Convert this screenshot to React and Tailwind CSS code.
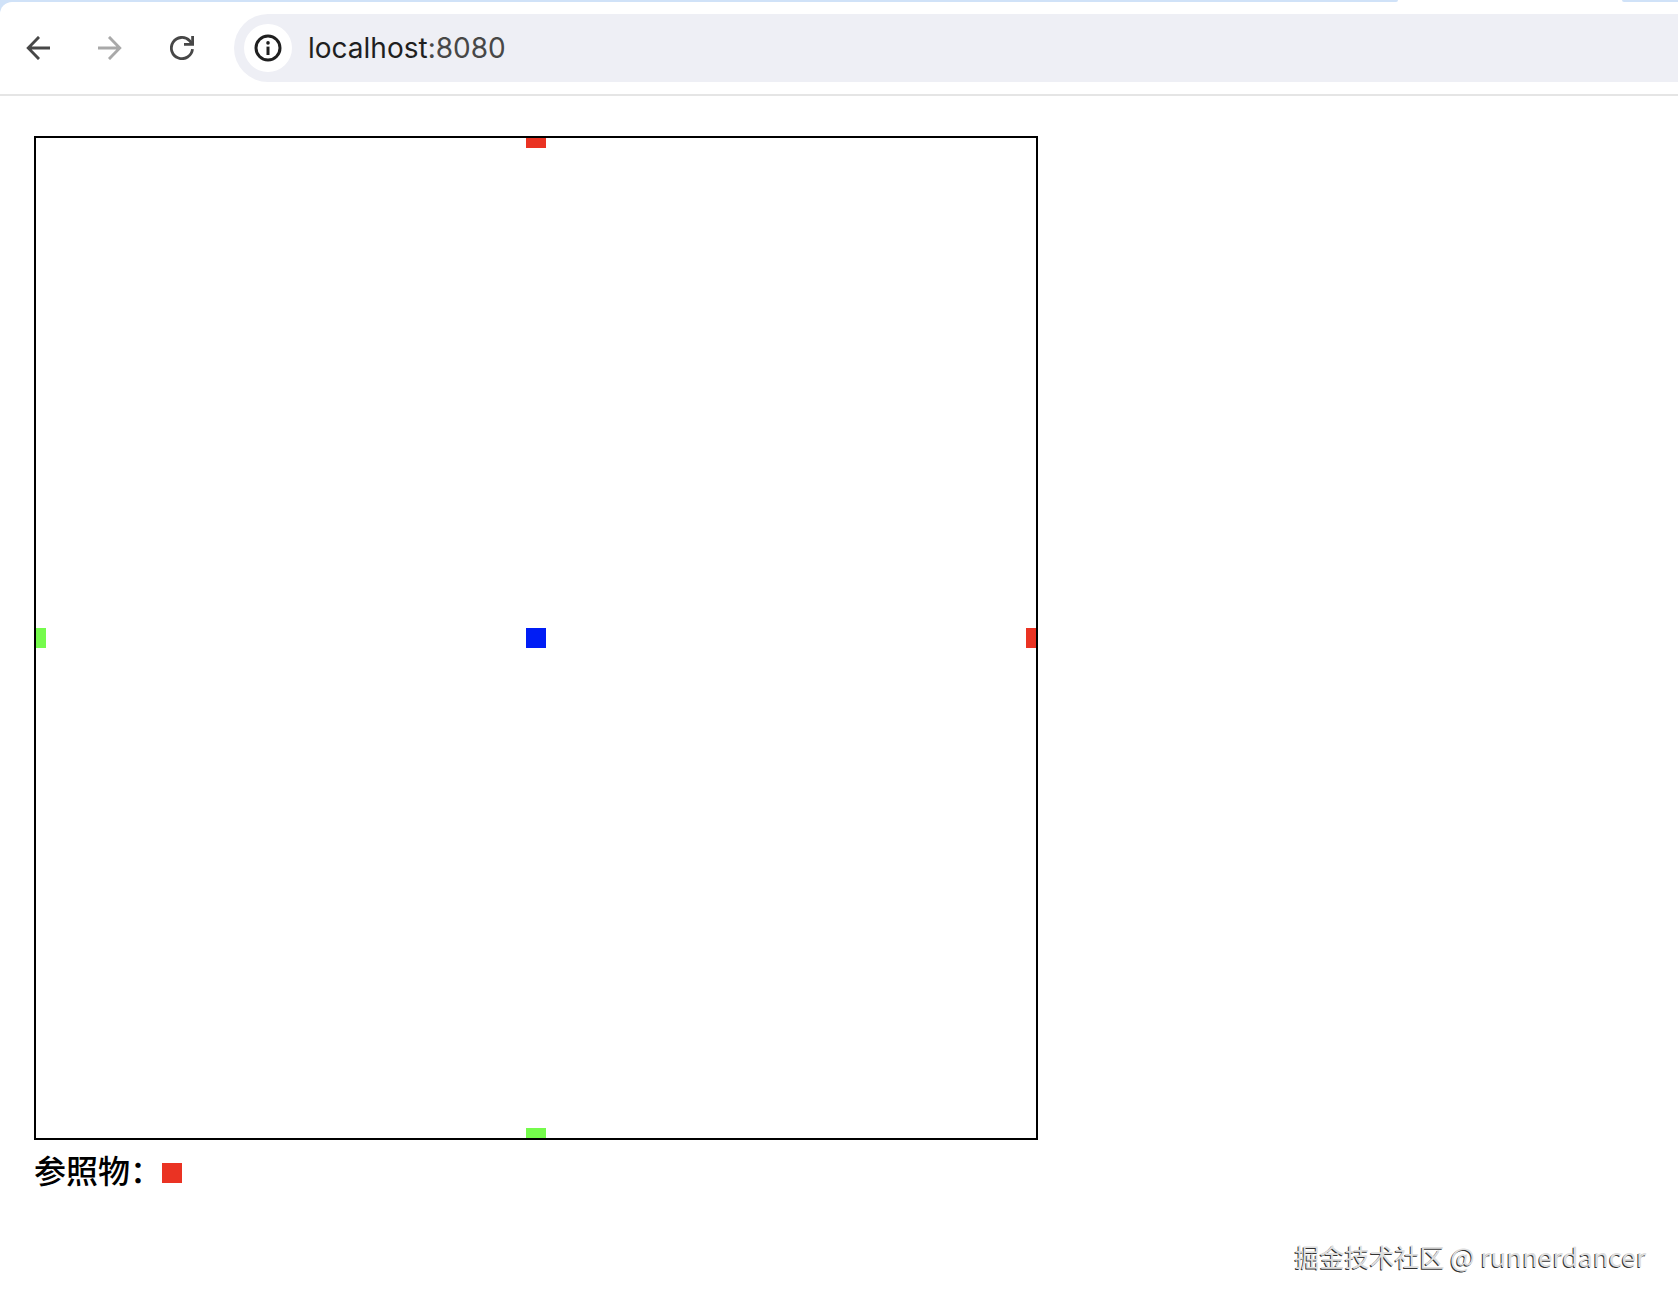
function Icon({ children, className }) {
  return (
    <svg viewBox="0 0 24 24" aria-hidden="true" className={className} fill="none" stroke="currentColor">
      {children}
    </svg>
  );
}

function TabStrip() {
  return (
    <div className="flex h-[2px] w-full bg-white">
      <div className="h-full flex-1 rounded-br-full bg-[#d0e2f8]" />
      <div className="h-full w-[224px]" />
      <div className="h-full w-[56px] rounded-bl-full bg-[#d0e2f8]" />
    </div>
  );
}

function Toolbar() {
  return (
    <header className="bg-[#d0e2f8]">
      <TabStrip />
      <div className="flex h-[94px] items-center rounded-tl-xl border-b-2 border-[#e5e5e5] bg-white">
        <nav className="flex shrink-0 items-center gap-12 pl-[26px]">
          <button type="button" aria-label="Back" className="size-6 text-[#474747]">
            <Icon className="size-6">
              <path d="M24 12H2.2M13 .9 2.2 12l10.8 11.1" strokeWidth="2.8" />
            </Icon>
          </button>
          <button type="button" aria-label="Forward" className="size-6 text-[#a9a9a9]">
            <Icon className="size-6">
              <path d="M0 12h21.8M11 .9 21.8 12 11 23.1" strokeWidth="2.8" />
            </Icon>
          </button>
          <button type="button" aria-label="Reload" className="size-6 text-[#474747]">
            <Icon className="size-6">
              <path d="M22.5 13.2A10.6 10.6 0 1 1 19.6 4.7l2.6 3.4" strokeWidth="2.8" />
              <path d="M22.6 0v8.4H14" strokeWidth="2.8" />
            </Icon>
          </button>
        </nav>
        <div className="ml-10 flex h-[68px] min-w-0 flex-1 items-center gap-4 rounded-l-full bg-[#eeeff5] pl-[10px]">
          <button
            type="button"
            aria-label="View site information"
            className="flex size-12 shrink-0 items-center justify-center rounded-full bg-white text-[#1f1f1f]"
          >
            <svg viewBox="0 0 28 28" aria-hidden="true" className="size-7">
              <circle cx="14" cy="14" r="12" fill="none" stroke="currentColor" strokeWidth="3" />
              <path d="M12.5 12.6h3V21h-3z" fill="currentColor" />
              <circle cx="14" cy="8.9" r="1.8" fill="currentColor" />
            </svg>
          </button>
          <a
            href="http://localhost:8080"
            className="font-['Inter',sans-serif] text-[28px] leading-9 text-[#1f1f1f]"
          >
            localhost<span className="text-[#474747]">:8080</span>
          </a>
        </div>
      </div>
    </header>
  );
}

function Board() {
  return (
    <div className="relative box-content size-[1000px] overflow-hidden border-2 border-black">
      <div className="absolute top-0 left-1/2 size-5 -translate-1/2 bg-[#ea3323]" />
      <div className="absolute top-1/2 left-full size-5 -translate-1/2 bg-[#ea3323]" />
      <div className="absolute top-1/2 left-1/2 size-5 -translate-1/2 bg-[#001df5]" />
      <div className="absolute top-1/2 left-0 size-5 -translate-1/2 bg-[#75fb4c]" />
      <div className="absolute top-full left-1/2 size-5 -translate-1/2 bg-[#75fb4c]" />
    </div>
  );
}

export default function App() {
  return (
    <div className="min-h-screen bg-white">
      <Toolbar />
      <main className="px-[34px] pt-10">
        <Board />
        <div className="mt-1 flex items-baseline font-['Noto_Sans_CJK_SC',sans-serif] text-[32px] leading-[50px] font-medium text-black">
          <span>参照物：</span>
          <span className="size-5 bg-[#ea3323]" />
        </div>
      </main>
      <footer className="mt-11 flex justify-end pr-8">
        <span className="font-['Noto_Sans_CJK_SC',sans-serif] text-[25px] leading-9 text-[#dedede] [text-shadow:-1px_1px_0_#333]">
          掘金技术社区 <span className="text-[26px]">@ runnerdancer</span>
        </span>
      </footer>
    </div>
  );
}
